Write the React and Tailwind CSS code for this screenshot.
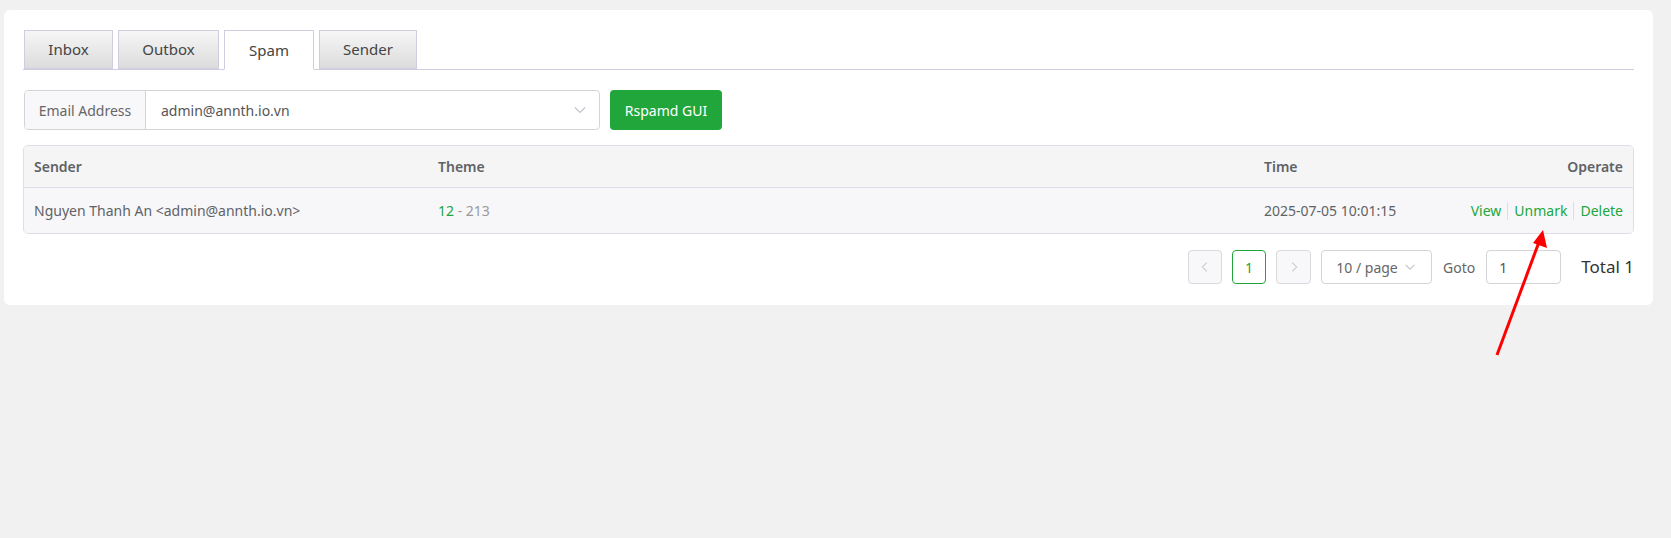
import React from "react";

const font = { fontFamily: '"Segoe UI", "Noto Sans", "Open Sans", sans-serif' };

function Tab({ label, active, w }) {
  return (
    <div
      className={`h-[39px] flex items-center justify-center border border-[#cfcde0] text-[15px] text-[#444] ${
        active ? "bg-white border-b-white -mb-px h-[40px]" : "bg-gradient-to-b from-[#f6f6f6] to-[#dcdcdc]"
      }`}
      style={{ width: w }}
    >
      {label}
    </div>
  );
}

function Chevron({ dir = "down", color = "#c0c4cc", size = 14 }) {
  const d =
    dir === "down"
      ? "M3 5.5 L8 10.5 L13 5.5"
      : dir === "left"
      ? "M10 3 L5 8 L10 13"
      : "M6 3 L11 8 L6 13";
  return (
    <svg width={size} height={size} viewBox="0 0 16 16" fill="none">
      <path d={d} stroke={color} strokeWidth="1.2" />
    </svg>
  );
}

export default function App() {
  return (
    <div className="relative w-[1671px] h-[538px] bg-[#f1f1f1] pt-[10px] pl-[4px]" style={font}>
      <div className="w-[1649px] bg-white rounded-[6px] px-[19px] pt-[20px] pb-[21px]">
        {/* Tabs */}
        <div className="flex items-end gap-[5px] border-b border-[#cfcde0] h-[40px] pl-px">
          <Tab label="Inbox" w={89} />
          <Tab label="Outbox" w={101} />
          <Tab label="Spam" w={90} active />
          <Tab label="Sender" w={98} />
        </div>

        {/* Email row */}
        <div className="flex items-center mt-[20px] pl-px">
          <div className="flex h-[40px] w-[576px] border border-[#d4d4d8] rounded-[4px] overflow-hidden">
            <div className="w-[121px] bg-[#f8f8fa] border-r border-[#d4d4d8] flex items-center justify-center text-[14px] text-[#666]">
              Email Address
            </div>
            <div className="flex-1 flex items-center justify-between pl-[15px] pr-[11px] text-[14px] text-[#555]">
              <span>admin@annth.io.vn</span>
              <Chevron size={16} />
            </div>
          </div>
          <button className="ml-[10px] h-[40px] w-[112px] bg-[#21a63c] text-white text-[14px] rounded-[4px]">
            Rspamd GUI
          </button>
        </div>

        {/* Table */}
        <div className="mt-[15px] border border-[#dcdfe6] rounded-[5px] overflow-hidden text-[14px]">
          <div className="grid grid-cols-[404px_826px_1fr_200px] h-[42px] items-center bg-[#f5f5f6] border-b border-[#dcdfe6] font-semibold text-[#606266]">
            <div className="pl-[10px]">Sender</div>
            <div className="pl-[10px]">Theme</div>
            <div className="pl-[10px]">Time</div>
            <div className="pr-[10px] text-right">Operate</div>
          </div>
          <div className="grid grid-cols-[404px_826px_1fr_200px] h-[45px] items-center bg-[#f7f7f9] text-[#606266] whitespace-nowrap">
            <div className="pl-[10px]">Nguyen Thanh An &lt;admin@annth.io.vn&gt;</div>
            <div className="pl-[10px]">
              <span className="text-[#21a63c]">12</span>
              <span className="text-[#9a9a9a]"> - 213</span>
            </div>
            <div className="pl-[10px]">2025-07-05 10:01:15</div>
            <div className="pr-[10px] flex justify-end items-center text-[#21a63c]">
              <span>View</span>
              <span className="mx-[6px] w-px h-[18px] bg-[#dedede]" />
              <span>Unmark</span>
              <span className="mx-[6px] w-px h-[18px] bg-[#dedede]" />
              <span>Delete</span>
            </div>
          </div>
        </div>

        {/* Pagination */}
        <div className="flex justify-end items-center mt-[16px] text-[14px]">
          <div className="w-[34px] h-[34px] border border-[#d9d9de] rounded-[4px] bg-[#f8f8fa] flex items-center justify-center">
            <Chevron dir="left" color="#c8c8cc" />
          </div>
          <div className="ml-[10px] w-[34px] h-[34px] border border-[#21a63c] rounded-[4px] flex items-center justify-center text-[#21a63c]">
            1
          </div>
          <div className="ml-[10px] w-[35px] h-[34px] border border-[#d9d9de] rounded-[4px] bg-[#f8f8fa] flex items-center justify-center">
            <Chevron dir="right" color="#c8c8cc" />
          </div>
          <div className="ml-[10px] w-[111px] h-[34px] border border-[#d4d4d8] rounded-[4px] flex items-center justify-center gap-[5px] text-[#666]">
            <span>10 / page</span>
            <Chevron />
          </div>
          <span className="ml-[11px] text-[#666]">Goto</span>
          <div className="ml-[11px] w-[75px] h-[34px] border border-[#d4d4d8] rounded-[4px] flex items-center pl-[12px] text-[#555]">
            1
          </div>
          <span className="ml-[20px] text-[17px] text-[#333]">Total 1</span>
        </div>
      </div>

      {/* Red annotation arrow */}
      <svg className="absolute left-0 top-0 pointer-events-none" width="1671" height="538">
        <line x1="1497" y1="355" x2="1539" y2="242" stroke="#ff0000" strokeWidth="3" />
        <polygon points="1543,230 1547,248 1533,243" fill="#ff0000" />
      </svg>
    </div>
  );
}
